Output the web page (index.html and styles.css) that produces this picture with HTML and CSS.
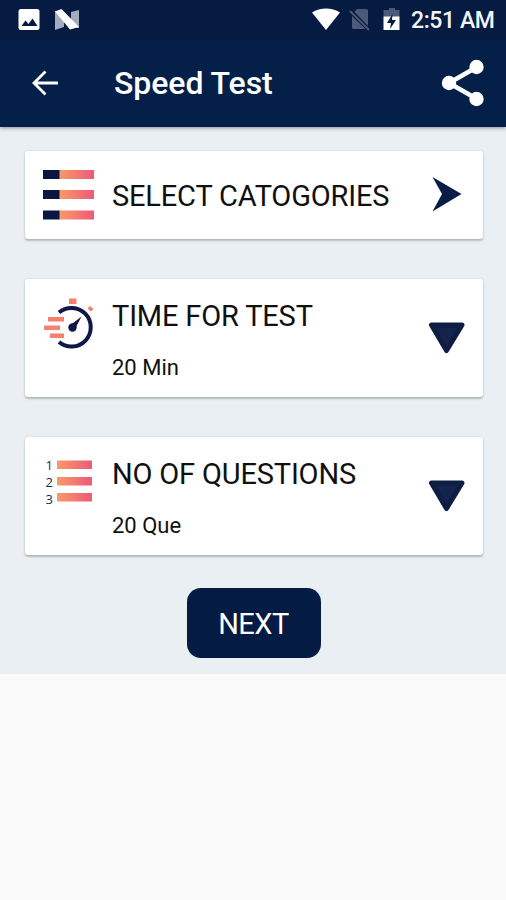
FILE: index.html
```html
<!DOCTYPE html>
<html lang="en">
<head>
<meta charset="utf-8">
<title>Speed Test</title>
<link rel="stylesheet" href="styles.css">
</head>
<body>
<header class="top">
  <div class="status">
    <svg class="status-left" width="64" height="24" viewBox="0 0 64 24">
      <rect x="0.5" y="1" width="21" height="21" rx="2.500" fill="#fff"/>
      <path d="M3.500 18l4-5.500 3 3.500 4-5.500 5 7.500z" fill="#061b42"/>
      <path d="M37 3l9 4v12l-9 3zM53 4l8-2v18l-8-1z" fill="#a3acbd"/>
      <path d="M37 3.500l6.500-2.500L61 19l-9 2.500z" fill="#fff"/>
    </svg>
    <svg class="status-right" width="90" height="24" viewBox="0 0 90 24">
      <path d="M0 4.500C8-1 20-1 28 4.500L14 22z" fill="#fff"/>
      <path d="M45 1h9.500q1.500 0 1.500 1.500V18L42.500 4zM40 8l13.500 13H41.500q-1.500 0-1.500-1.500z" fill="#4b5a76"/>
      <path d="M38 3l19 19" stroke="#4b5a76" stroke-width="1.800"/>
      <path d="M77 0h6v2h4.500v7h-16V2H77z" fill="#4b5a76"/>
      <path d="M71.500 8.500h16V22h-16z" fill="#fff"/>
      <path d="M80.500 6l-5.500 9h4l-1 6 6-9h-4z" fill="#061b42"/>
    </svg>
    <span class="clock">2:51 AM</span>
  </div>
  <div class="bar">
    <svg class="back" width="28" height="28" viewBox="0 0 28 28" fill="none" stroke="#fff" stroke-width="2.800">
      <path d="M27 14H3M14.500 2.500L3 14l11.500 11.500"/>
    </svg>
    <h1 class="title">Speed Test</h1>
    <svg class="share" width="44" height="48" viewBox="0 0 44 48">
      <path d="M36 8L8 24l28 16" fill="none" stroke="#fff" stroke-width="4.600"/>
      <g fill="#fff"><circle cx="35.500" cy="8" r="7.200"/><circle cx="8" cy="24" r="7.200"/><circle cx="35.500" cy="40" r="7.200"/></g>
    </svg>
  </div>
</header>
<main class="panel">
  <section class="card card-short">
    <svg class="icon" width="54" height="54" viewBox="0 0 54 54">
      <defs><linearGradient id="warm"><stop offset="0" stop-color="#f99a68"/><stop offset="1" stop-color="#ee5a78"/></linearGradient></defs>
      <g fill="url(#warm)"><rect x="17" y="2" width="35" height="9"/><rect x="17" y="22" width="35" height="9"/><rect x="17" y="42.500" width="35" height="9"/></g>
      <g fill="#0b1743"><rect x="1" y="2" width="16.500" height="9"/><rect x="1" y="22" width="16.500" height="9"/><rect x="1" y="42.500" width="16.500" height="9"/></g>
    </svg>
    <div class="text"><h2 class="label">SELECT CATOGORIES</h2></div>
    <svg class="marker" width="38" height="38" viewBox="0 0 38 38"><path d="M4.500 2L33.500 19 4.500 36.500 14 19z" fill="#0a1b47"/></svg>
  </section>
  <section class="card">
    <svg class="icon" width="54" height="54" viewBox="0 0 54 54">
      <path d="M17 14.500a19.300 19.300 0 1 1 0 29.500" fill="none" stroke="#0e1748" stroke-width="4"/>
      <circle cx="30.500" cy="29.500" r="4.200" fill="#0e1748"/>
      <path d="M28.500 27L39.500 18.500 33 31z" fill="#0e1748"/>
      <g fill="#f77f6d"><rect x="27" y="0.500" width="7.500" height="5.500"/><rect x="6" y="19" width="16" height="4.500"/><rect x="2" y="27.500" width="16" height="4.500"/><rect x="8" y="35.500" width="14" height="4.500"/><path d="M48 8l3.500 3-2.500 2.500-3.500-3z"/></g>
    </svg>
    <div class="text"><h2 class="label">TIME FOR TEST</h2><p class="value">20 Min</p></div>
    <svg class="marker" width="38" height="38" viewBox="0 0 38 38"><path d="M3.500 6h30.500L18.500 31.500z" fill="#13234b" stroke="#0e1d44" stroke-width="5" stroke-linejoin="round"/></svg>
  </section>
  <section class="card">
    <svg class="icon" width="54" height="54" viewBox="0 0 54 54">
      <g class="digits"><text x="3.500" y="13.500">1</text><text x="3.500" y="31">2</text><text x="3.500" y="47.500">3</text></g>
      <g fill="url(#warm)"><rect x="15" y="4.500" width="35" height="8.500"/><rect x="15" y="21" width="35" height="8.500"/><rect x="15" y="37" width="35" height="8.500"/></g>
    </svg>
    <div class="text"><h2 class="label">NO OF QUESTIONS</h2><p class="value">20 Que</p></div>
    <svg class="marker" width="38" height="38" viewBox="0 0 38 38"><path d="M3.500 6h30.500L18.500 31.500z" fill="#13234b" stroke="#0e1d44" stroke-width="5" stroke-linejoin="round"/></svg>
  </section>
  <button class="next">NEXT</button>
</main>
</body>
</html>
```

FILE: styles.css
```css
* { box-sizing: border-box; }
body { margin: 0; background: #fafafa; font-family: Roboto, "Liberation Sans", sans-serif; color: #101010; }
.top { position: relative; height: 127px; background: #041f48; box-shadow: 0 1px 4px rgba(0, 0, 0, .4); }
.status { display: flex; align-items: center; height: 40px; padding: 0 12px 0 18px; background: #061b42; }
.status-left { margin-top: -1px; }
.status-right { margin-left: auto; margin-top: -1px; }
.clock { width: 83px; margin-left: 9px; padding-top: 2px; color: #f3f4f8; font-size: 23px; font-weight: 500; line-height: 40px; letter-spacing: -.4px; white-space: nowrap; }
.bar { display: flex; align-items: center; height: 87px; padding: 0 21px 1px 31px; }
.back { margin-right: 55px; }
.title { margin: 0; color: #fff; font-size: 32px; font-weight: 500; line-height: 40px; letter-spacing: -.05px; }
.share { margin-left: auto; }
.panel { display: flex; flex-direction: column; height: 547px; padding: 24px 23px 0 25px; background: #e9eff3; }
.card { display: flex; height: 118px; margin-bottom: 40px; padding: 19px 17px 0; background: #fff; border-radius: 3px; box-shadow: 0 2px 2px rgba(70, 80, 80, .3), 0 0 2px rgba(70, 80, 80, .2); }
.card-short { height: 88px; padding-top: 17px; }
.icon { flex: none; margin-right: 16px; }
.text { flex: 1; }
.label { margin: 0; font-size: 29px; font-weight: 400; line-height: 36px; letter-spacing: -.17px; white-space: nowrap; }
.card-short .label { margin-top: 10px; }
.value { margin: 20px 0 0; font-size: 22px; line-height: 28px; }
.marker { flex: none; margin-top: 21px; }
.card-short .marker { margin-top: 7px; }
.digits { font: 13px "Open Sans", sans-serif; fill: #25294c; }
.next { align-self: center; width: 134px; height: 70px; margin-top: -7px; margin-left: -1px; padding: 2px 0 0; border: 0; border-radius: 14px; background: #041b43; color: #fff; font: 29px Roboto, sans-serif; letter-spacing: -.5px; }
```
